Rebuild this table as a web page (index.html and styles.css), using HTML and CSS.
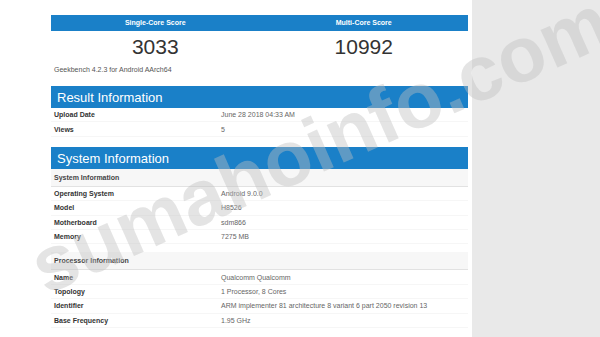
FILE: index.html
```html
<!DOCTYPE html>
<html>
<head>
    <title>Geekbench Browser</title>
    <link rel="stylesheet" href="styles.css">
</head>
<body>
    <div class="page">
        <main class="content">
            <div class="scores">
                <div class="score">
                    <div class="score-head">Single-Core Score</div>
                    <div class="score-value">3033</div>
                </div>
                <div class="score">
                    <div class="score-head">Multi-Core Score</div>
                    <div class="score-value">10992</div>
                </div>
            </div>
            <p class="version">Geekbench 4.2.3 for Android AArch64</p>

            <section class="panel">
                <h2 class="panel-title">Result Information</h2>
                <table class="info">
                    <tr><td class="name">Upload Date</td><td class="value">June 28 2018 04:33 AM</td></tr>
                    <tr><td class="name">Views</td><td class="value">5</td></tr>
                </table>
            </section>

            <section class="panel">
                <h2 class="panel-title">System Information</h2>
                <table class="info">
                    <tr class="group"><th colspan="2">System Information</th></tr>
                    <tr><td class="name">Operating System</td><td class="value">Android 9.0.0</td></tr>
                    <tr><td class="name">Model</td><td class="value">H8526</td></tr>
                    <tr><td class="name">Motherboard</td><td class="value">sdm866</td></tr>
                    <tr><td class="name">Memory</td><td class="value">7275 MB</td></tr>
                </table>
                <table class="info spaced">
                    <tr class="group"><th colspan="2">Processor Information</th></tr>
                    <tr><td class="name">Name</td><td class="value">Qualcomm Qualcomm</td></tr>
                    <tr><td class="name">Topology</td><td class="value">1 Processor, 8 Cores</td></tr>
                    <tr><td class="name">Identifier</td><td class="value">ARM implementer 81 architecture 8 variant 6 part 2050 revision 13</td></tr>
                    <tr><td class="name">Base Frequency</td><td class="value">1.95 GHz</td></tr>
                </table>
            </section>
        </main>
        <aside class="side"></aside>
    </div>
    <div class="watermark">sumahoinfo.com</div>
</body>
</html>
```

FILE: styles.css
```css
body {
    margin: 0;
    font-family: "Liberation Sans", Arial, sans-serif;
    color: #333;
    overflow: hidden;
}
.page {
    display: flex;
    height: 337px;
}
.content {
    width: 417px;
    padding: 15px 4px 0 51px;
    background: #fff;
}
.side {
    flex: 1;
    background: #e9e9e9;
}

/* score header */
.scores {
    display: flex;
}
.score {
    flex: 1;
    text-align: center;
}
.score-head {
    height: 16px;
    line-height: 16px;
    background-color: #1a80c8;
    color: #fff;
    font-size: 7px;
    font-weight: bold;
}
.score-value {
    height: 30px;
    line-height: 31px;
    font-size: 21px;
    color: #333;
}
.version {
    margin: 4px 0 11px 3px;
    line-height: 10px;
    font-size: 7px;
    color: #555;
}

/* info panels */
.panel {
    margin-bottom: 10px;
}
.panel-title {
    margin: 0;
    height: 22px;
    line-height: 23px;
    padding-left: 6px;
    background-color: #1a80c8;
    color: #fff;
    font-size: 13px;
    font-weight: normal;
}
.info {
    width: 100%;
    border-collapse: collapse;
    font-size: 7px;
}
.info td {
    height: 13.4px;
    padding: 0 3px;
    border-bottom: 1px solid #f6f6f6;
}
.info .name {
    width: 161px;
    font-weight: bold;
    color: #333;
}
.info .value {
    color: #666;
}
.group th {
    height: 17px;
    padding: 0 3px;
    text-align: left;
    background: #f7f7f7;
    border-bottom: 1px solid #e2e2e2;
    font-weight: bold;
    color: #444;
}
.spaced {
    margin-top: 8px;
}

.watermark {
    position: absolute;
    left: 19px;
    top: 235px;
    transform-origin: 0 0;
    transform: rotate(-24deg);
    font-size: 78px;
    line-height: 1;
    font-weight: bold;
    color: rgba(190, 190, 190, 0.42);
    white-space: nowrap;
    pointer-events: none;
}
```
